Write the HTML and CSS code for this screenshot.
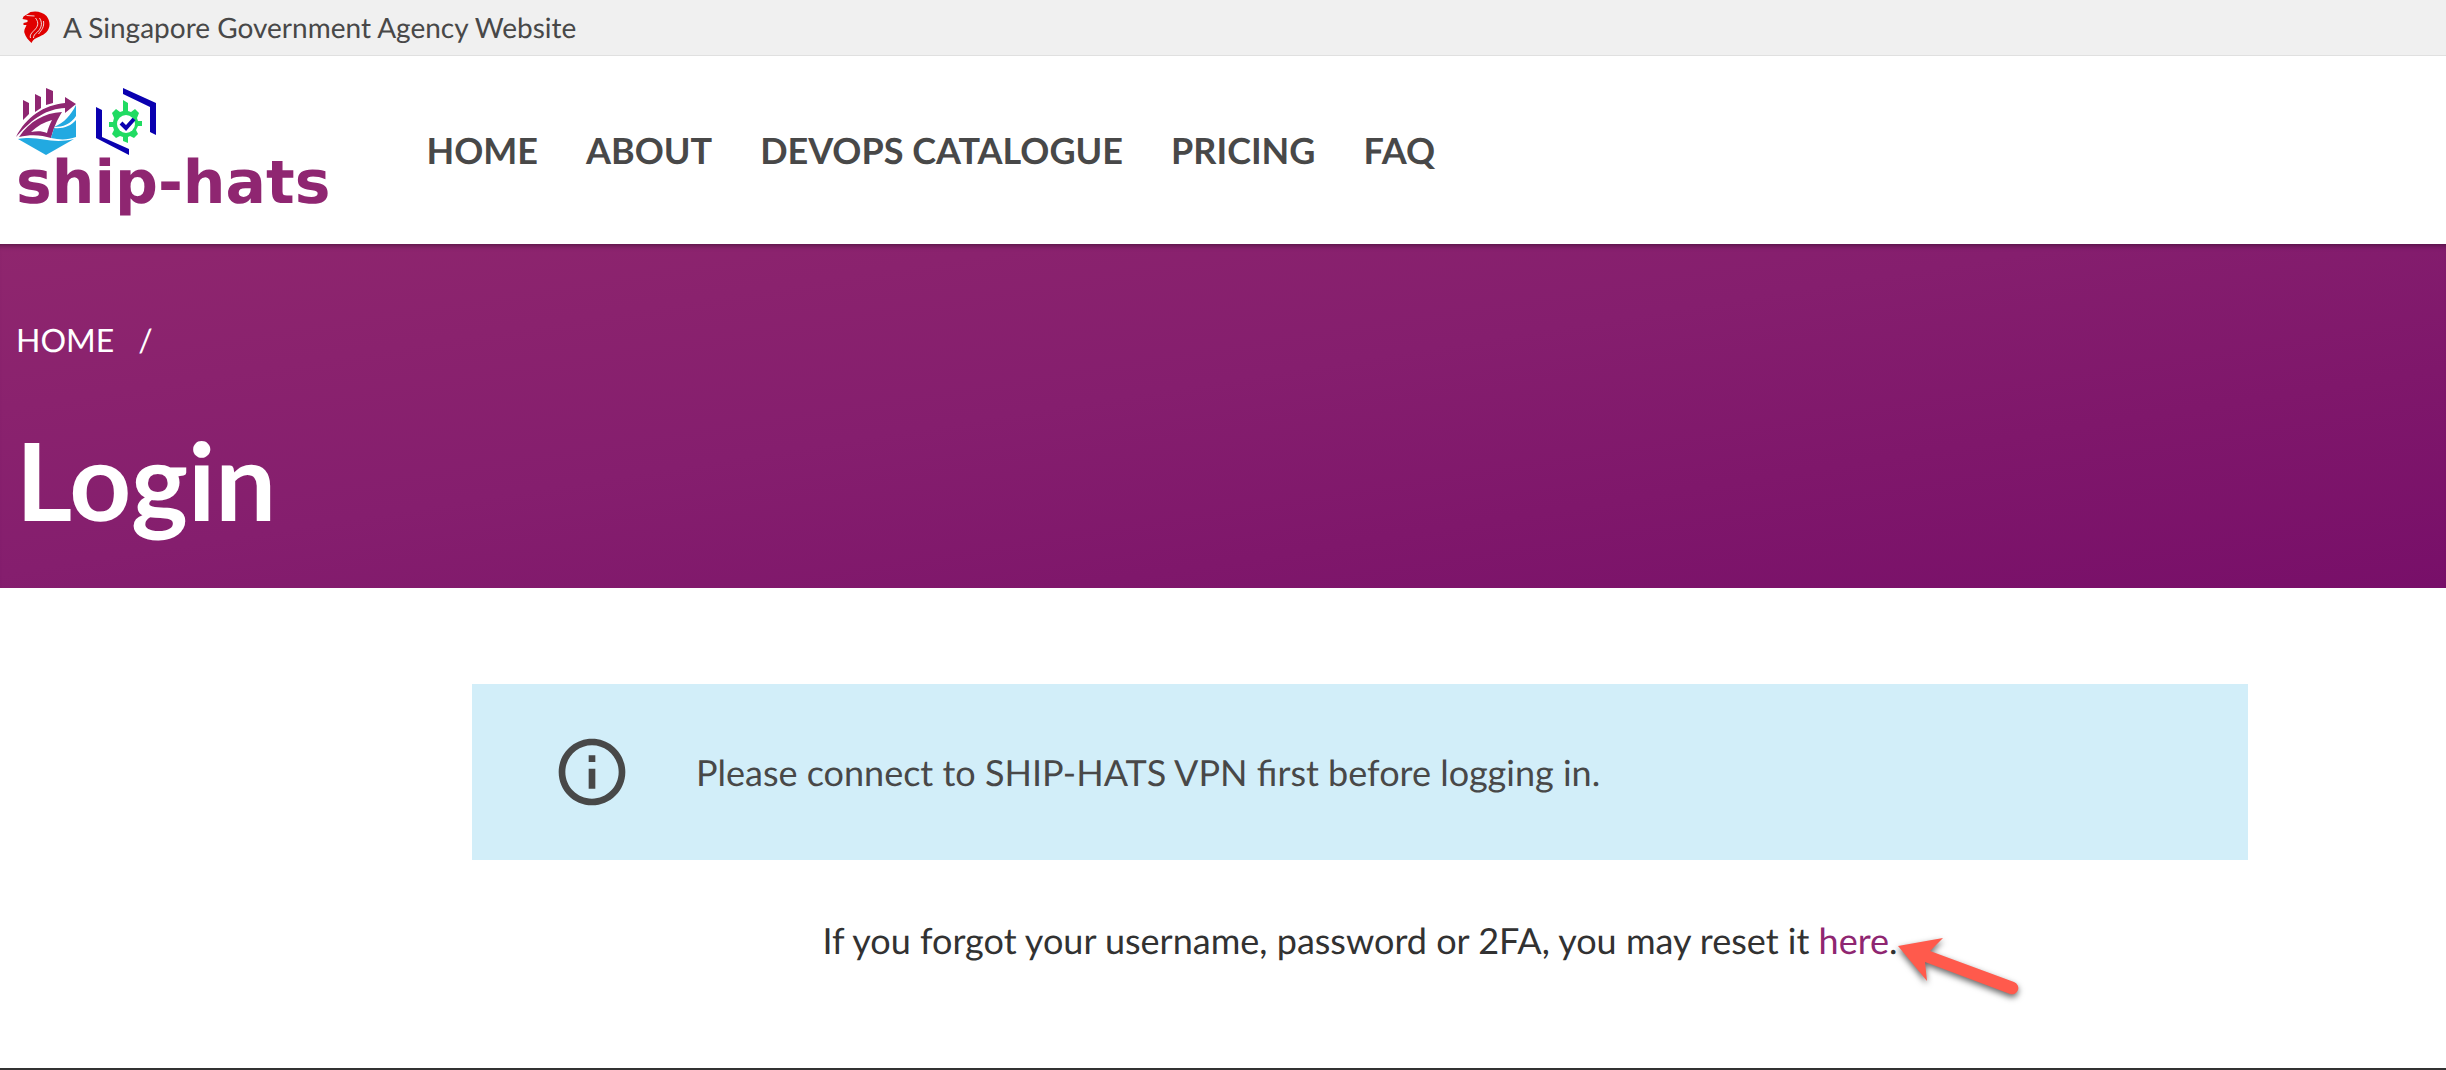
FILE: index.html
```html
<!DOCTYPE html>
<html lang="en">
<head>
<meta charset="utf-8">
<meta name="viewport" content="width=device-width, initial-scale=1">
<title>Login - SHIP-HATS</title>
<link rel="stylesheet" href="styles.css">
</head>
<body>
<div class="masthead">
  <svg class="masthead-lion" viewBox="0 0 28 32" aria-hidden="true">
    <path fill="#e00000" d="M1 5.500L5 3l3-2C14-.5 20 1 24 5c3 4 4 9 2 13-2 5-8 7-12 9-3 1-4 3-5 5-3-3-6-6-7-10-1-3 1-5 2-8H1v-2l4-1V9L0 8z"/>
    <path fill="none" stroke="#f0f0f0" stroke-width=".9" d="M4 4.500l8 .5M13 7c4 5 2 9-1 12-3 3-5 5-4 8M17 7c4 6 1 11-2 14-3 2-4 4-4 6M21 10c1 6-2 9-5 13"/>
  </svg>
  <span>A Singapore Government Agency Website</span>
</div>
<header class="site-header">
  <a class="brand" href="#">
    <span class="brand-marks">
      <svg class="brand-mark" viewBox="0 0 60 68" aria-hidden="true">
        <path fill="#8f2671" d="M7 13l6 3v11l-6 6zM19 7l6 3v11l-6 4zM30 1l7 3v12l-7 2z"/>
        <path fill="#8f2671" d="M0 50C10 30 28 18 49 16v-6l11 7-11 9v-5C31 22 18 30 0 50z"/>
        <path fill="#8f2671" fill-rule="evenodd" d="M3 50C14 34 28 26 46 25c-5 8-8 15-11 26-9-3-20-4-32-1zM15 45c6-1 11-1 16 1 1-5 3-9 5-13-8 2-15 6-21 12z"/>
        <path fill="#22a9e1" d="M60 18v11c-5 8-13 11-22 11 10-4 17-12 22-22zM60 33v17c-8 3-16 3-25 1l3-10c9 1 17-2 22-8zM2 52c22-4 32 6 56 0L30 68z"/>
      </svg>
      <svg class="brand-mark" viewBox="0 0 60 68" aria-hidden="true">
        <path fill="#0a00b0" d="M27 1l33 15v32l-6-3V20L27 7zM0 20l6 3v27l27 12v6L0 51z"/>
        <path fill="#20db62" d="M27 13l5 3v8l3 1 4-3 4 4-2 5 1 3h4v5h-4l-2 4 2 4-4 4-4-2-2 1v6l-5-2v-4l-3-1-4 2-4-4 2-4-1-3h-4v-5h4l1-4-2-5 4-4 4 3 3-1z"/>
        <circle cx="30" cy="37" r="9" fill="#fff"/>
        <path fill="none" stroke="#0a00b0" stroke-width="4" d="M25 36l5 5 8-9"/>
      </svg>
    </span>
    <span class="brand-name">ship-hats</span>
  </a>
  <nav class="main-nav" aria-label="Main">
    <a href="#">HOME</a>
    <a href="#">ABOUT</a>
    <a href="#">DEVOPS CATALOGUE</a>
    <a href="#">PRICING</a>
    <a href="#">FAQ</a>
  </nav>
</header>
<section class="hero">
  <nav class="breadcrumb" aria-label="Breadcrumb">
    <a href="#">HOME</a>
    <span>/</span>
  </nav>
  <h1>Login</h1>
</section>
<main class="content">
  <div class="notice">
    <svg class="notice-icon" viewBox="0 0 24 24" aria-hidden="true">
      <path fill="#484848" d="M11 7h2v2h-2zm0 4h2v6h-2zm1-9C6.480 2 2 6.480 2 12s4.480 10 10 10 10-4.480 10-10S17.520 2 12 2zm0 18c-4.410 0-8-3.590-8-8s3.590-8 8-8 8 3.590 8 8-3.590 8-8 8z"/>
    </svg>
    <p>Please connect to SHIP-HATS VPN first before logging in.</p>
  </div>
  <p class="reset">If you forgot your username, password or 2FA, you may reset it <a href="#">here</a>.<span class="pointer"><svg viewBox="0 0 128 64" aria-hidden="true">
      <path fill="#ff5a4c" d="M0 8L45 0 32 13 116 44a6 6 0 0 1-4 12L27 24l2 19z"/>
    </svg></span></p>
</main>
<footer class="site-footer"></footer>
</body>
</html>
```
FILE: styles.css
```css
* {
  box-sizing: border-box;
}

body {
  margin: 0;
  min-height: 100vh;
  display: flex;
  flex-direction: column;
  background: #fff;
  color: #323232;
  font-family: Lato, sans-serif;
  font-size: 36px;
  line-height: 56px;
  text-rendering: geometricPrecision;
}

a {
  color: inherit;
  text-decoration: none;
}

p,
h1 {
  margin: 0;
}

.masthead {
  display: flex;
  align-items: center;
  gap: 12px;
  height: 56px;
  padding: 0 22px 1px;
  background: #f0f0f0;
  border-bottom: 1px solid #e0e0e0;
  color: #484848;
  font-size: 28px;
}

.masthead-lion {
  width: 29px;
  height: 32px;
}

.site-header {
  display: flex;
  align-items: flex-start;
  gap: 96px;
  height: 188px;
  padding: 31px 16px 0;
}

.brand {
  display: block;
}

.brand-marks {
  display: flex;
  gap: 20px;
}

.brand-mark {
  width: 60px;
  height: 68px;
}

.brand-name {
  display: block;
  color: #8f2671;
  font-family: "DejaVu Sans", sans-serif;
  font-size: 60px;
  font-weight: 700;
  line-height: 56px;
}

.main-nav {
  display: flex;
  gap: 48px;
  padding-top: 35px;
  color: #484848;
  font-size: 36px;
  font-weight: 700;
}

.hero {
  height: 344px;
  padding: 68px 16px 0;
  background: linear-gradient(171deg, #8f266e, #851e6e 45%, #7f176b 70%, #780f69);
  box-shadow: inset 0 6px 6px -6px rgba(0, 0, 0, 0.6);
  color: #fff;
}

.breadcrumb {
  display: flex;
  gap: 24px;
  font-size: 32px;
}

h1 {
  padding-top: 44px;
  font-size: 108px;
  font-weight: 700;
  line-height: 136px;
}

.content {
  flex: 1;
  display: grid;
  grid-template-columns: 472fr 1776fr 198fr;
  grid-auto-rows: max-content;
  row-gap: 52px;
  padding: 96px 0;
}

.content > * {
  grid-column: 2;
}

.notice {
  display: flex;
  align-items: center;
  gap: 64px;
  padding: 48px 80px;
  background: #d2eef9;
  color: #484848;
}

.notice-icon {
  width: 80px;
  height: 80px;
}

.reset {
  text-align: center;
}

.reset a {
  color: #8f2671;
}

.pointer {
  position: relative;
}

.pointer svg {
  position: absolute;
  top: 20px;
  left: 0;
  width: 128px;
  height: 64px;
  overflow: visible;
  filter: drop-shadow(0 3px 3px rgba(0, 0, 0, 0.6));
}

.site-footer {
  height: 2px;
  background: #323232;
}
```
